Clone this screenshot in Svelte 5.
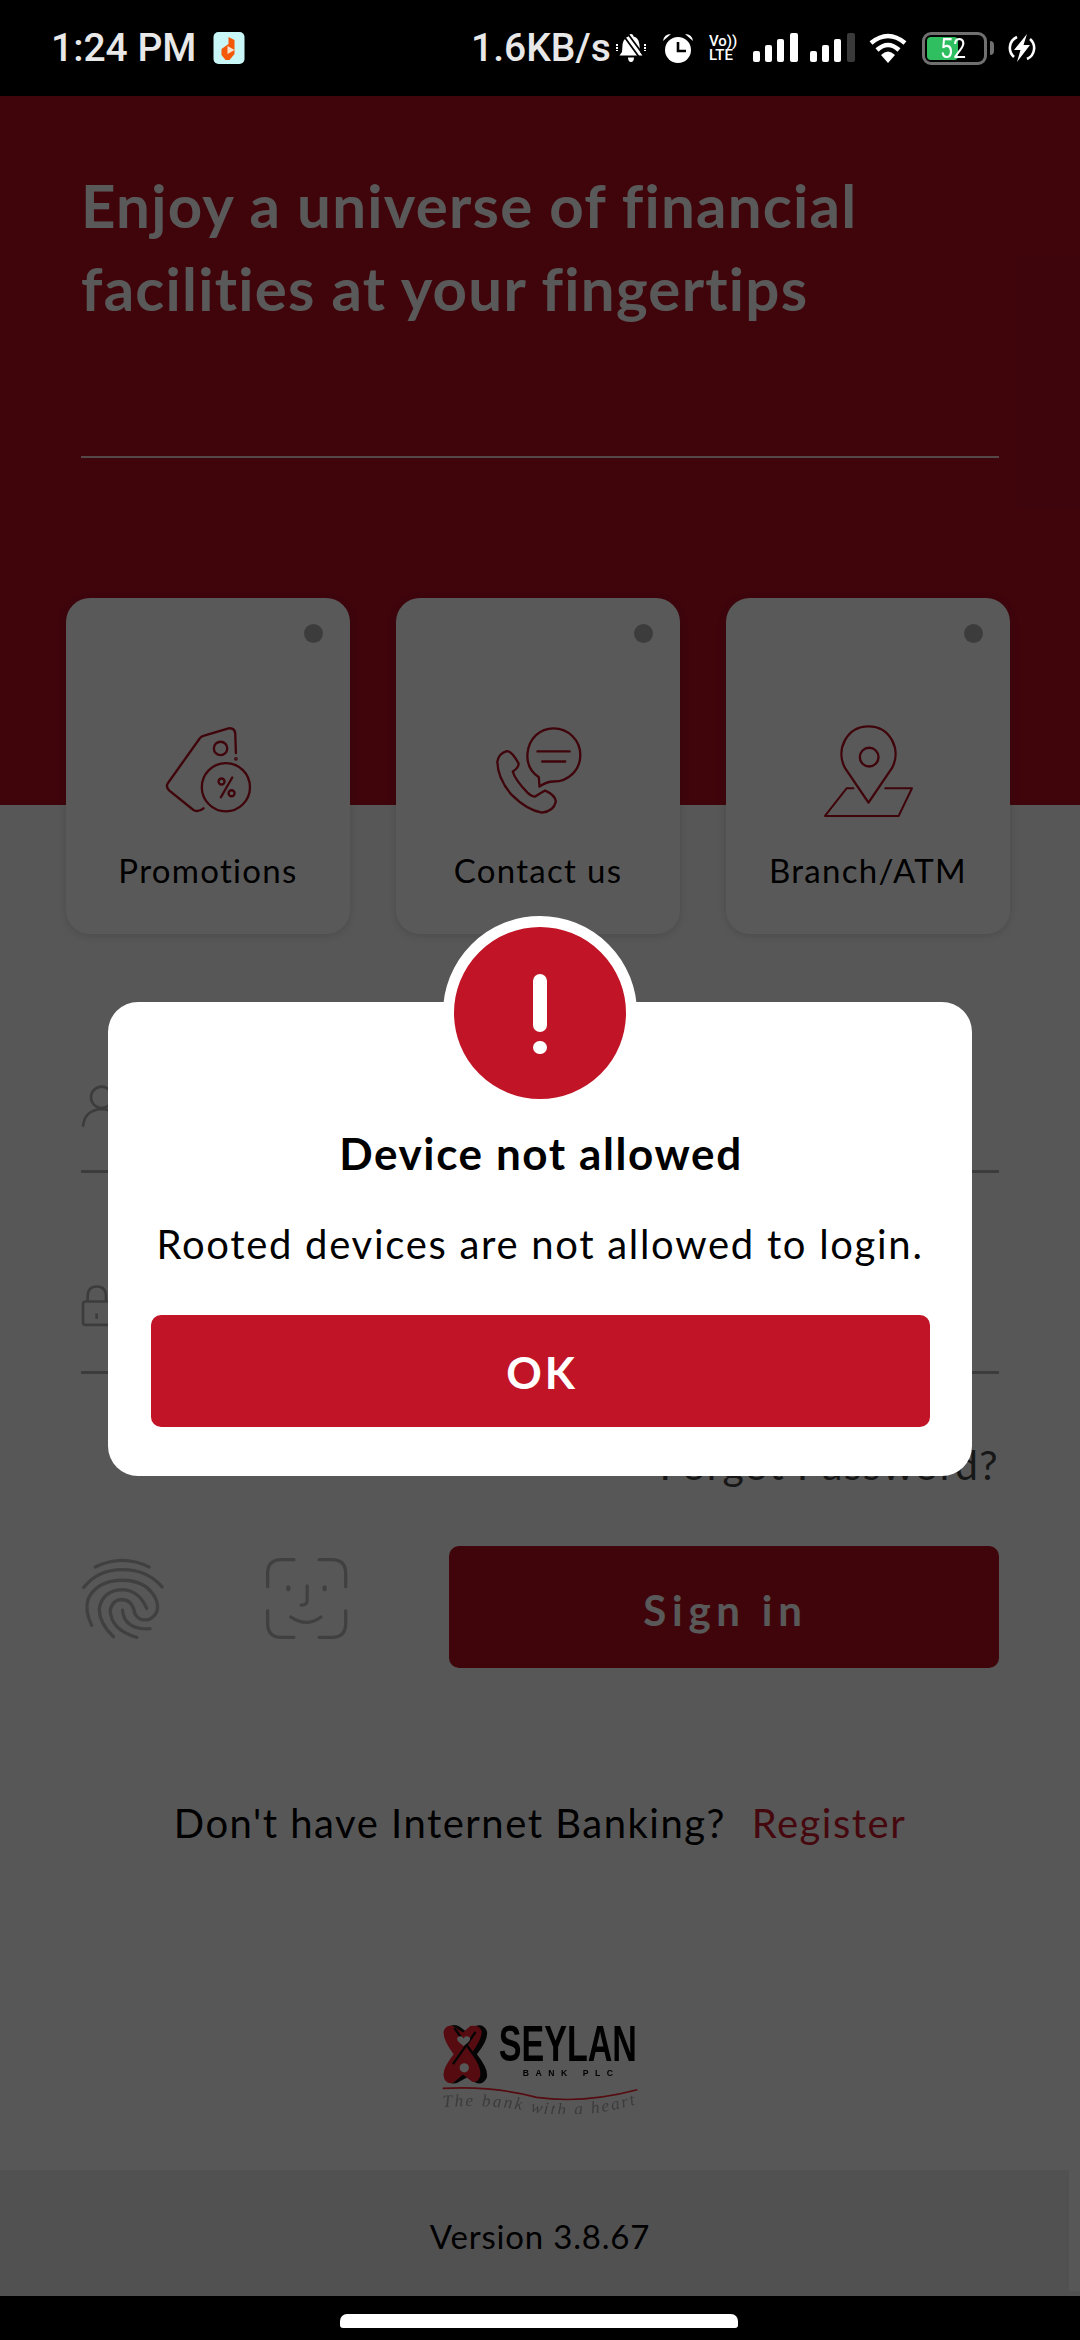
<script>
  const cards = [
    { label: 'Promotions', icon: 'tag' },
    { label: 'Contact us', icon: 'phone' },
    { label: 'Branch/ATM', icon: 'pin' }
  ];
</script>

<div class="phone">
  <header class="status">
    <span class="time">1:24 PM</span>
    <svg class="app-icon" viewBox="0 0 31 32">
      <rect width="31" height="32" rx="5" fill="#c9f6f6" />
      <path d="M15 5l6 3v14l-5 6h-4l-4-5v-6l7-5z" fill="#f4590a" />
      <path d="M14 14l7 4-7 4z" fill="#f3e2d0" />
    </svg>
    <span class="speed">1.6KB/s</span>
    <svg class="ic-bell" viewBox="0 0 30 30">
      <path d="M15 1c1.500 0 2.500 1 2.500 2.500 4 1 5.500 4 6 8.500l.5 7 2.500 3.500H3.500L6 19l.5-7C7 7.500 9.500 4.500 12.500 3.500 12.500 2 13.500 1 15 1zM12 24.500h6c0 2.500-1 4.500-3 4.500s-3-2-3-4.500z" fill="#fff" />
      <path d="M7 2l19 26M12 1l17 23" stroke="#000" stroke-width="1.800" />
      <path d="M1 11v7M29 11v7" stroke="#fff" stroke-width="2" stroke-dasharray="2 1" />
    </svg>
    <svg class="ic-alarm" viewBox="0 0 32 30">
      <circle cx="16" cy="17" r="13" fill="#fff" />
      <path d="M16 9v9h8" fill="none" stroke="#000" stroke-width="2.600" />
      <path d="M1 8Q2 1 9 1zM31 8Q30 1 23 1z" fill="#fff" />
    </svg>
    <div class="volte"><span>Vo))</span><span>LTE</span></div>
    <svg class="ic-signal" viewBox="0 0 45 29">
      <rect x="0" y="18" width="7" height="11" rx="2" fill="#fff" />
      <rect x="12" y="12" width="7" height="17" rx="2" fill="#fff" />
      <rect x="24" y="6" width="7" height="23" rx="2" fill="#fff" />
      <rect x="37" y="0" width="8" height="29" rx="2" fill="#fff" />
    </svg>
    <svg class="ic-signal two" viewBox="0 0 45 29">
      <rect x="0" y="18" width="7" height="11" rx="2" fill="#fff" />
      <rect x="12" y="12" width="7" height="17" rx="2" fill="#fff" />
      <rect x="24" y="6" width="7" height="23" rx="2" fill="#fff" />
      <rect x="37" y="0" width="8" height="29" rx="2" fill="#3a3a3a" />
    </svg>
    <svg class="ic-wifi" viewBox="0 0 38 30">
      <path d="M2 10Q19-4 36 10M8 17Q19 7 30 17" fill="none" stroke="#fff" stroke-width="4.500" />
      <path d="M12 22Q19 15 26 22L19 30z" fill="#fff" />
    </svg>
    <div class="battery">
      <div class="shell"><div class="fill"></div><span>52</span></div>
      <div class="nub"></div>
    </div>
    <svg class="ic-charge" viewBox="0 0 28 28">
      <path d="M9 3A12 12 0 0 0 6 23M19 25A12 12 0 0 0 22 5" fill="none" stroke="#fff" stroke-width="2.600" />
      <path d="M19 0L6 16h6.500L9 28l13-17h-6.500z" fill="#fff" />
    </svg>
  </header>

  <main class="screen">
    <section class="hero">
      <h1>Enjoy a universe of financial<br />facilities at your fingertips</h1>
      <div class="divider"></div>
    </section>

    <div class="cards">
      {#each cards as card}
        <div class="card">
          <span class="dot"></span>
          {#if card.icon === 'tag'}
            <svg class="card-icon" viewBox="330 400 290 290">
              <path d="M460 655Q445 668 430 660L358 602Q345 590 355 578L448 447Q452 440 462 438L535 416Q553 414 555 432L557 490" />
              <circle cx="557" cy="507" r="2" />
              <circle cx="527" cy="592" r="72" />
              <circle cx="511" cy="476" r="20" />
              <circle cx="514" cy="575" r="9" stroke-width="7" />
              <circle cx="544" cy="610" r="9" stroke-width="7" />
              <path d="M546 563L512 622" stroke-width="7" />
            </svg>
          {:else if card.icon === 'phone'}
            <svg class="card-icon" viewBox="150 130 290 290">
              <path d="M298 320L296 292C270 275 260 250 262 222C266 175 300 146 340 146C385 146 420 182 420 226C420 270 385 305 340 305C325 305 315 308 298 320Z" />
              <path d="M292 215H388M306 245H375" />
              <path d="M172 245Q175 222 200 214Q215 214 235 250Q238 262 218 275Q225 300 262 338Q275 350 285 350Q300 340 315 332Q345 345 347 365Q340 395 305 398Q260 390 215 345Q172 295 172 245Z" />
            </svg>
          {:else}
            <svg class="card-icon" viewBox="360 400 290 290">
              <path d="M505 638L435 535C405 480 440 410 505 410C570 410 605 480 575 535Z" />
              <circle cx="507" cy="502" r="28" />
              <path d="M460 595H440L375 678H595L635 595H555" stroke-width="6" />
            </svg>
          {/if}
          <span class="card-label">{card.label}</span>
        </div>
      {/each}
    </div>

    <section class="login">
      <div class="field first">
        <svg class="user" viewBox="60 130 120 135">
          <circle cx="122" cy="170" r="32" />
          <path d="M66 258Q70 208 122 205Q174 208 178 258" />
        </svg>
      </div>
      <div class="field second">
        <svg class="lock" viewBox="60 738 96 128">
          <path d="M80 790V775Q80 745 107 745Q135 745 135 775V790" />
          <rect x="66" y="790" width="84" height="70" rx="8" />
          <path d="M107 826V842" />
        </svg>
      </div>
      <div class="forgot">Forgot Password?</div>

      <div class="actions">
        <svg class="print" viewBox="60 80 250 250">
          <path d="M103 110Q185 70 265 110" />
          <path d="M68 172Q110 118 185 118Q260 118 304 170" />
          <path d="M92 286Q70 240 82 205Q110 150 185 150Q260 150 287 210Q300 250 265 268Q235 275 222 250" />
          <path d="M158 320Q115 280 115 235Q125 180 185 178Q235 180 258 235" />
          <path d="M228 322Q150 300 148 240Q155 208 185 208Q215 210 222 250" />
          <path d="M268 296Q190 300 185 240" />
        </svg>
        <svg class="face" viewBox="612 80 252 252">
          <path d="M620 170V130Q620 88 662 88H700M776 88H815Q857 88 857 130V170M620 243V282Q620 324 662 324H700M776 324H815Q857 324 857 282V243" />
          <path d="M683 172V178M793 172V178" stroke-width="13" />
          <path d="M740 168V212Q740 226 722 226M690 262Q738 295 782 262" />
        </svg>
        <button class="signin">Sign in</button>
      </div>

      <p class="register">Don't have Internet Banking? <a href="#register">Register</a></p>

      <svg class="logo" viewBox="90 75 600 280">
        <defs>
          <path id="tagline" d="M98 335Q250 322 380 352Q520 372 683 325" />
        </defs>
        <path d="M112 95Q125 82 145 90L170 108L195 90Q220 82 230 105Q236 130 200 175Q236 220 230 245Q220 268 198 262L170 245L140 262Q115 268 108 245Q104 220 140 175Q104 130 112 95Z" fill="#111" />
        <path d="M100 105Q108 85 128 90L158 110L180 90Q208 85 214 105Q218 125 184 172Q214 215 210 240Q204 262 186 258L158 236L128 262Q102 265 100 240Q96 218 130 175Q96 130 100 105Z" fill="#f2202e" />
        <path d="M132 96L200 190M196 108L128 205" fill="none" stroke="#111" stroke-width="7" />
        <path d="M160 150Q130 130 146 122Q156 118 160 128Q164 118 174 122Q190 130 160 150Z" fill="#f9f9f9" />
        <circle cx="162" cy="216" r="14" fill="#f9f9f9" />
        <text class="logo-name" x="266" y="194" textLength="416" lengthAdjust="spacingAndGlyphs">SEYLAN</text>
        <text class="logo-sub" x="338" y="242" textLength="272">BANK PLC</text>
        <path d="M97 278Q250 270 380 305Q520 325 683 282" fill="none" stroke="#f2202e" stroke-width="5" />
        <text class="logo-tag"><textPath href="#tagline" textLength="585">The bank with a heart</textPath></text>
      </svg>
    </section>

    <footer class="version"><span>Version 3.8.67</span><i class="scroll"></i></footer>

    <div class="overlay"></div>

    <div class="dialog">
      <div class="badge">
        <span class="bar"></span>
        <span class="point"></span>
      </div>
      <h2>Device not allowed</h2>
      <p>Rooted devices are not allowed to login.</p>
      <button class="ok">OK</button>
    </div>
  </main>

  <div class="nav"><span></span></div>
</div>

<style>
  :global(body) {
    margin: 0;
    background: #000;
  }

  .phone {
    width: 1080px;
    height: 2340px;
    display: flex;
    flex-direction: column;
    overflow: hidden;
    font-family: Lato, "Open Sans", sans-serif;
    color: #000;
  }

  /* status bar */
  .status {
    height: 96px;
    flex: none;
    background: #000;
    display: flex;
    align-items: center;
    padding-left: 51px;
    color: #e8e8e8;
    font-family: Roboto, sans-serif;
    font-weight: 500;
  }
  .time {
    font-size: 39px;
    width: 162px;
    white-space: nowrap;
  }
  .app-icon {
    width: 32px;
    height: 32px;
    margin-top: -1px;
  }
  .speed {
    font-size: 39px;
    margin-left: 226px;
    width: 145px;
    white-space: nowrap;
  }
  .ic-bell {
    width: 30px;
    height: 30px;
    margin-top: -1px;
  }
  .ic-alarm {
    width: 32px;
    height: 30px;
    margin-left: 16px;
    margin-top: -1px;
  }
  .volte {
    width: 31px;
    margin-left: 15px;
    display: flex;
    flex-direction: column;
    font-size: 15px;
    line-height: 14px;
    color: #fff;
    white-space: nowrap;
  }
  .ic-signal {
    width: 45px;
    height: 29px;
    margin-left: 13px;
    margin-top: -1px;
  }
  .ic-signal.two {
    margin-left: 12px;
  }
  .ic-wifi {
    width: 38px;
    height: 30px;
    margin-left: 14px;
    margin-top: -1px;
  }
  .battery {
    display: flex;
    align-items: center;
    margin-left: 15px;
  }
  .shell {
    position: relative;
    width: 65px;
    height: 33px;
    box-sizing: border-box;
    border: 3px solid #707070;
    border-radius: 9px;
    padding: 2px;
  }
  .fill {
    width: 31px;
    height: 100%;
    background: #30bf60;
    border-radius: 4px;
  }
  .shell span {
    position: absolute;
    left: 15px;
    top: -2px;
    font-size: 27px;
    line-height: 32px;
    font-weight: 400;
    color: #fff;
    transform: scaleX(0.85);
    transform-origin: left;
  }
  .nub {
    width: 4px;
    height: 14px;
    margin-left: 3px;
    background: #707070;
    border-radius: 0 4px 4px 0;
  }
  .ic-charge {
    width: 28px;
    height: 28px;
    margin-left: 14px;
  }

  /* page under the dialog */
  .screen {
    position: relative;
    flex: 1;
    min-height: 0;
    background: #f9f9f9;
    display: flex;
    flex-direction: column;
  }
  .hero {
    height: 709px;
    flex: none;
    box-sizing: border-box;
    background: #b50f22;
    padding: 68px 81px 0;
    color: #fff;
  }
  h1 {
    margin: 0;
    font-size: 60px;
    line-height: 83px;
    font-weight: 700;
    letter-spacing: 1.250px;
    height: 292px;
  }
  .divider {
    height: 2px;
    background: rgba(255, 255, 255, 0.8);
  }

  .cards {
    margin-top: -207px;
    padding-left: 66px;
    display: flex;
    gap: 46px;
    position: relative;
  }
  .card {
    position: relative;
    width: 284px;
    height: 336px;
    box-sizing: border-box;
    padding-top: 125px;
    background: #fff;
    border-radius: 24px;
    box-shadow: 0 2px 10px rgba(0, 0, 0, 0.14);
    display: flex;
    flex-direction: column;
    align-items: center;
  }
  .dot {
    position: absolute;
    top: 26px;
    right: 27px;
    width: 19px;
    height: 19px;
    border-radius: 50%;
    background: #adadad;
  }
  .card-icon {
    width: 97px;
    height: 97px;
    fill: none;
    stroke: #b50f22;
    stroke-width: 7;
    stroke-linecap: round;
    stroke-linejoin: round;
  }
  .card-label {
    margin-top: 30px;
    font-size: 33px;
    line-height: 40px;
    letter-spacing: 1.300px;
  }

  .login {
    flex: 1;
    min-height: 0;
    padding: 0 81px;
    display: flex;
    flex-direction: column;
  }
  .field {
    border-bottom: 3px solid #adadad;
  }
  .field svg {
    display: block;
    fill: none;
    stroke: #adadad;
    stroke-width: 8;
  }
  .first {
    margin-top: 149px;
    height: 87px;
  }
  .first .user {
    width: 40px;
    height: 45px;
    margin-top: 1px;
  }
  .second {
    height: 198px;
    display: flex;
    align-items: flex-end;
  }
  .second .lock {
    width: 32px;
    height: 43px;
    margin-bottom: 44px;
  }
  .forgot {
    margin-top: 68px;
    text-align: right;
    font-size: 41px;
    line-height: 46px;
    letter-spacing: 1.300px;
    color: #444;
  }
  .actions {
    margin-top: 58px;
    display: flex;
    gap: 101px;
    align-items: flex-start;
  }
  .print,
  .face {
    flex: none;
    width: 83px;
    height: 83px;
    margin-top: 11px;
    fill: none;
    stroke: #b8b8b8;
    stroke-width: 10;
    stroke-linecap: round;
  }
  .signin {
    flex: 1;
    height: 122px;
    border: 0;
    border-radius: 10px;
    background: #b50f22;
    color: #fff;
    font: 700 42px Lato, sans-serif;
    letter-spacing: 5.800px;
    padding: 5px 0 0 3px;
  }
  .register {
    margin: 132px 0 0;
    text-align: center;
    font-size: 40px;
    line-height: 46px;
    letter-spacing: 1.500px;
    white-space: nowrap;
  }
  .register a {
    color: #c9182b;
    margin-left: 14px;
    text-decoration: none;
  }
  .logo {
    align-self: center;
    width: 200px;
    height: 93px;
    margin-top: 175px;
    filter: blur(0.5px);
  }
  .logo-name {
    font: 700 150px "Liberation Sans", sans-serif;
    fill: #000;
  }
  .logo-sub {
    font: 700 26px "Liberation Sans", sans-serif;
    fill: #000;
  }
  .logo-tag {
    font: italic 400 52px "Liberation Serif", serif;
    fill: #aaa;
  }

  .version {
    position: relative;
    height: 126px;
    box-sizing: border-box;
    flex: none;
    background: #e8e8e8;
    display: flex;
    align-items: center;
    justify-content: center;
    font-size: 33px;
    letter-spacing: 0.8px;
    padding-top: 6px;
  }
  .scroll {
    position: absolute;
    right: 0;
    top: 0;
    bottom: 5px;
    width: 11px;
    background: #f9f9f9;
  }

  .overlay {
    position: absolute;
    inset: 0;
    background: rgba(0, 0, 0, 0.65);
  }

  .dialog {
    position: absolute;
    left: 108px;
    top: 906px;
    width: 864px;
    height: 474px;
    box-sizing: border-box;
    padding: 124px 43px 0;
    background: #fff;
    border-radius: 30px;
    text-align: center;
  }
  .badge {
    position: absolute;
    left: 335px;
    top: -86px;
    width: 172px;
    height: 172px;
    border: 11px solid #fff;
    border-radius: 50%;
    background: #c11426;
  }
  .bar,
  .point {
    position: absolute;
    background: #fff;
    border-radius: 7px;
  }
  .bar {
    left: 79px;
    top: 47px;
    width: 14px;
    height: 58px;
  }
  .point {
    left: 79px;
    top: 114px;
    width: 14px;
    height: 13px;
  }
  h2 {
    margin: 0;
    font-size: 44px;
    line-height: 54px;
    font-weight: 700;
    letter-spacing: 1.600px;
    padding-left: 2px;
  }
  .dialog p {
    margin: 40px 0 0;
    font-size: 40px;
    line-height: 48px;
    letter-spacing: 1.700px;
    white-space: nowrap;
  }
  .ok {
    display: block;
    width: 779px;
    height: 112px;
    margin-top: 47px;
    border: 0;
    border-radius: 10px;
    background: #c11426;
    color: #fff;
    font: 700 44px Lato, sans-serif;
    letter-spacing: 3px;
    padding: 2px 0 0 3px;
  }

  .nav {
    height: 44px;
    flex: none;
    background: #000;
    position: relative;
  }
  .nav span {
    position: absolute;
    left: 340px;
    top: 18px;
    width: 398px;
    height: 14px;
    background: #fff;
    border-radius: 7px 7px 3px 3px;
  }
</style>
